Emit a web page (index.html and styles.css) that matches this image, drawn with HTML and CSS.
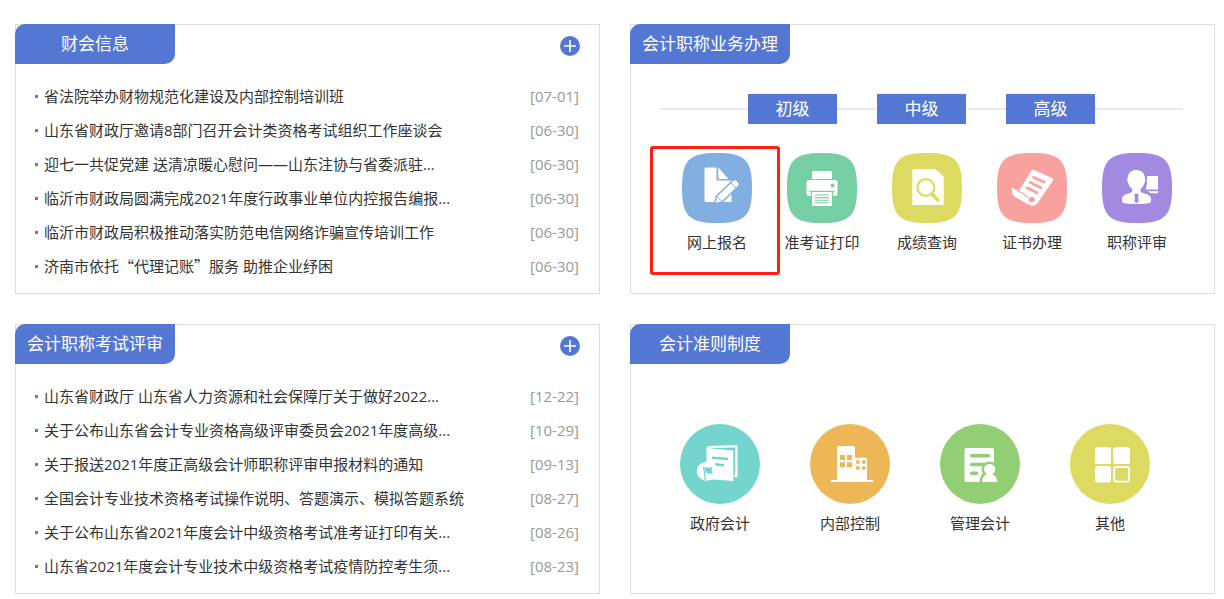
FILE: index.html
```html
<!DOCTYPE html>
<html lang="zh-CN">
<head>
<meta charset="utf-8">
<meta name="viewport" content="width=device-width, initial-scale=1">
<title>会计服务</title>
<link rel="stylesheet" href="styles.css">
</head>
<body>
<main class="board">
  <section class="panel">
    <header class="panel-head">
      <h2 class="tab">财会信息</h2>
      <a class="more" href="#" aria-label="更多财会信息"><svg viewBox="0 0 20 20"><circle cx="10" cy="10" r="10" fill="#5577d4"/><path d="M4 10H16M10 4V16" stroke="#fff" stroke-width="1.6"/></svg></a>
    </header>
    <ul class="news">
      <li><a href="#">省法院举办财物规范化建设及内部控制培训班</a><time>[07-01]</time></li>
      <li><a href="#">山东省财政厅邀请8部门召开会计类资格考试组织工作座谈会</a><time>[06-30]</time></li>
      <li><a href="#">迎七一共促党建 送清凉暖心慰问——山东注协与省委派驻...</a><time>[06-30]</time></li>
      <li><a href="#">临沂市财政局圆满完成2021年度行政事业单位内控报告编报...</a><time>[06-30]</time></li>
      <li><a href="#">临沂市财政局积极推动落实防范电信网络诈骗宣传培训工作</a><time>[06-30]</time></li>
      <li><a href="#">济南市依托<span class="cjk">“</span>代理记账<span class="cjk">”</span>服务 助推企业纾困</a><time>[06-30]</time></li>
    </ul>
  </section>

  <section class="panel">
    <header class="panel-head">
      <h2 class="tab">会计职称业务办理</h2>
    </header>
    <div class="levels">
      <button class="level" type="button">初级</button>
      <button class="level" type="button">中级</button>
      <button class="level" type="button">高级</button>
    </div>
    <nav class="services">
      <a class="service marked" href="#">
        <svg viewBox="0 0 70 70"><path d="M0 35C0 7 7 0 35 0S70 7 70 35 63 70 35 70 0 63 0 35Z" fill="#81afe1"/><path d="M24 14.5H34.5V27.5H49.5V49H24Q22.5 49 22.5 47.5V16Q22.5 14.5 24 14.5Z" fill="#fff"/><path d="M36.3 14.5L46 25.5V26H37.5Q36.3 26 36.3 24.8Z" fill="#fff"/><path d="M33.7 49.7L35.2 43.5 51.5 27.8Q53 26.7 54.4 28L56.2 30Q57.2 31.5 56 32.8L39.8 48.3Z" fill="#fff" stroke="#81afe1" stroke-width="3" paint-order="stroke"/><path d="M48.8 29.8L54.2 35.3M35.2 43.5L39.8 48.3" stroke="#81afe1" stroke-width="1" fill="none"/></svg>
        <span>网上报名</span>
      </a>
      <a class="service" href="#">
        <svg viewBox="0 0 70 70"><path d="M0 35C0 7 7 0 35 0S70 7 70 35 63 70 35 70 0 63 0 35Z" fill="#76cea4"/><path d="M26 18H44Q45 18 45 19V26H25V19Q25 18 26 18Z" fill="#fff"/><path d="M22 27H48Q50.5 27 50.5 30V41Q50.5 43 48.5 43H22Q19.5 43 19.5 41V30Q19.5 27 22 27Z" fill="#fff"/><circle cx="45.6" cy="32.6" r="2" fill="#76cea4"/><path d="M23 38.5H47" stroke="#76cea4" stroke-width="1.4" stroke-linecap="round"/><path d="M24 39V54H46V39" fill="#76cea4"/><path d="M25 39H45V52Q45 53 44 53H26Q25 53 25 52Z" fill="#fff"/><path d="M28 42H42M28 44.6H42M28 47.2H42M28 49.8H42" stroke="#76cea4" stroke-width="1.1"/></svg>
        <span>准考证打印</span>
      </a>
      <a class="service" href="#">
        <svg viewBox="0 0 70 70"><path d="M0 35C0 7 7 0 35 0S70 7 70 35 63 70 35 70 0 63 0 35Z" fill="#dcda60"/><path d="M20.3 16H43.5L51.7 23.5V52H20.3Z" fill="#fff"/><circle cx="33.8" cy="34.5" r="8.4" fill="none" stroke="#dcda60" stroke-width="2.3"/><path d="M40.5 41.5L45.8 47" stroke="#dcda60" stroke-width="3.4" stroke-linecap="round"/></svg>
        <span>成绩查询</span>
      </a>
      <a class="service" href="#">
        <svg viewBox="0 0 70 70"><path d="M0 35C0 7 7 0 35 0S70 7 70 35 63 70 35 70 0 63 0 35Z" fill="#f9a19f"/><path d="M34.5 17.6Q35.5 16.2 37 16.9L55 25Q56.8 26 55.7 28L40.5 50Q38 53.3 34 52.5Q31.5 52 17.3 43.2Q14 40 15.3 34.6Q18 37 21.7 38Z" fill="#fff"/><path d="M21 38Q26 40 31.5 44.5" stroke="#f9a19f" stroke-width="1.2" fill="none"/><path d="M36.5 24.3L47.2 29.2M33.2 29.4L43.8 34.8M30 34.8L40 39.8" stroke="#f9a19f" stroke-width="2.7" stroke-linecap="round"/><path d="M32.2 48.8Q30.6 44.4 34.6 43.8Q38.2 44.2 37.8 47.2Q36.8 49.8 33.8 49.2" fill="#f9a19f"/></svg>
        <span>证书办理</span>
      </a>
      <a class="service" href="#">
        <svg viewBox="0 0 70 70"><path d="M0 35C0 7 7 0 35 0S70 7 70 35 63 70 35 70 0 63 0 35Z" fill="#a28ae0"/><path d="M45 23H55Q56 23 56 24V36.5H43.5L45 31Z" fill="#fff"/><path d="M45.5 38.2H56V40.2H48.5Z" fill="#fff"/><path d="M34.3 17C40 17 43 20.8 43 25.5Q44 27 42.8 29.3Q41.5 34 38.5 35.8V38.3Q39 40 44.5 41Q49 42.5 49 46V49Q47 51 34.5 51T20 49V46Q20 42.5 24.5 41Q30 40 30.3 38.3V35.8Q27.2 34 26 29.3Q24.5 27 25.6 25.5C25.6 20.8 28.6 17 34.3 17Z" fill="#fff"/><path d="M33 40.8H36L36.7 43 36 44.3 36.7 48.5 34.5 50 32.3 48.5 33 44.3 32.3 43Z" fill="#a28ae0"/></svg>
        <span>职称评审</span>
      </a>
    </nav>
  </section>

  <section class="panel">
    <header class="panel-head">
      <h2 class="tab">会计职称考试评审</h2>
      <a class="more" href="#" aria-label="更多会计职称考试评审"><svg viewBox="0 0 20 20"><circle cx="10" cy="10" r="10" fill="#5577d4"/><path d="M4 10H16M10 4V16" stroke="#fff" stroke-width="1.6"/></svg></a>
    </header>
    <ul class="news">
      <li><a href="#">山东省财政厅 山东省人力资源和社会保障厅关于做好2022...</a><time>[12-22]</time></li>
      <li><a href="#">关于公布山东省会计专业资格高级评审委员会2021年度高级...</a><time>[10-29]</time></li>
      <li><a href="#">关于报送2021年度正高级会计师职称评审申报材料的通知</a><time>[09-13]</time></li>
      <li><a href="#">全国会计专业技术资格考试操作说明、答题演示、模拟答题系统</a><time>[08-27]</time></li>
      <li><a href="#">关于公布山东省2021年度会计中级资格考试准考证打印有关...</a><time>[08-26]</time></li>
      <li><a href="#">山东省2021年度会计专业技术中级资格考试疫情防控考生须...</a><time>[08-23]</time></li>
    </ul>
  </section>

  <section class="panel">
    <header class="panel-head">
      <h2 class="tab">会计准则制度</h2>
    </header>
    <nav class="topics">
      <a class="topic" href="#">
        <svg viewBox="0 0 80 80"><circle cx="40" cy="40" r="40" fill="#74d4ce"/><path d="M26.5 25Q26.5 22.2 29.5 22L57.5 21V53H54V50.8L55.2 50.6V23.4L30 24Z" fill="#fff"/><path d="M26.5 24L53.3 26.5V57L33 55.5 25.5 57Q16.8 54 16.8 47.5Q17.3 39 26.5 37.5Z" fill="#fff"/><path d="M32 33.7L48 35M35 40.3L44 41.2" stroke="#74d4ce" stroke-width="2.4"/><path d="M23.6 42.5L25.4 56.5" stroke="#74d4ce" stroke-width="1.3"/><path d="M24.6 42.8Q28 44.5 32.7 42.8L31.5 46 33 49.5Q29.5 50.5 25.8 48.8Z" fill="#74d4ce"/></svg>
        <span>政府会计</span>
      </a>
      <a class="topic" href="#">
        <svg viewBox="0 0 80 80"><circle cx="40" cy="40" r="40" fill="#edb657"/><path d="M21 56H27V24Q27 22 29 22H43Q45 22 45 24V33.7H55.5Q57 33.7 57 35.2V56H63V58H21Z" fill="#fff"/><path d="M30 31H35V36H30ZM37 31H42V36H37ZM30 38.3H35V43.3H30ZM37 38.3H42V43.3H37Z" fill="#edb657"/><g fill="#edb657"><rect x="46" y="36.3" width="3.6" height="3.4" rx="1"/><rect x="52" y="36.3" width="3.6" height="3.4" rx="1"/><rect x="46" y="42.3" width="3.6" height="3.4" rx="1"/><rect x="52" y="42.3" width="3.6" height="3.4" rx="1"/></g></svg>
        <span>内部控制</span>
      </a>
      <a class="topic" href="#">
        <svg viewBox="0 0 80 80"><circle cx="40" cy="40" r="40" fill="#92cf74"/><rect x="24.5" y="24" width="29.5" height="34" rx="2" fill="#fff"/><path d="M31.5 31.8H48.5M31.5 40.5H45M31.5 49.2H36.5" stroke="#92cf74" stroke-width="3.5" stroke-linecap="round"/><path d="M49.6 40C53 40 55.3 42.3 55.3 45.3Q55.3 48.5 52.5 50Q57.3 52.5 57.3 58H42Q42 52.5 46.8 50Q44 48.5 44 45.3C44 42.3 46.3 40 49.6 40Z" fill="#fff" stroke="#92cf74" stroke-width="5" paint-order="stroke"/><path d="M38 58H61V62H38Z" fill="#92cf74"/></svg>
        <span>管理会计</span>
      </a>
      <a class="topic" href="#">
        <svg viewBox="0 0 80 80"><circle cx="40" cy="40" r="40" fill="#dcda60"/><g fill="#fff"><rect x="25" y="23.3" width="16" height="16.7" rx="2"/><rect x="43.2" y="23.3" width="16.8" height="16.7" rx="2"/><rect x="25" y="42" width="16" height="16.5" rx="2"/></g><rect x="44.2" y="43" width="14.8" height="14.6" rx="1.5" fill="none" stroke="#fff" stroke-width="1.8"/></svg>
        <span>其他</span>
      </a>
    </nav>
  </section>
</main>
</body>
</html>
```
FILE: styles.css
```css
* {
  box-sizing: border-box;
}

body {
  margin: 0;
  background: #fff;
  color: #333;
  font: 15px/20px "Open Sans", "Noto Sans CJK SC", sans-serif;
}

a {
  color: inherit;
  text-decoration: none;
}

svg {
  display: block;
  width: 100%;
}

.board {
  display: grid;
  grid-template-columns: repeat(2, minmax(0, 1fr));
  gap: 30px;
  padding: 24px 9px 5px 15px;
}

.panel {
  border: 1px solid #ddd;
}

.panel-head {
  display: flex;
  align-items: flex-start;
  justify-content: space-between;
  margin: -1px;
  padding-right: 20px;
}

.tab {
  width: 160px;
  margin: 0;
  border-radius: 10px 0;
  background: #5577d4;
  color: #fff;
  font-size: 17px;
  font-weight: 400;
  line-height: 40px;
  text-align: center;
}

.more {
  width: 20px;
  margin-top: 12px;
}

.news {
  margin: 0;
  padding: 16px 20px 10px 19px;
  list-style: none;
}

.news li {
  display: flex;
  align-items: center;
  line-height: 34px;
}

.news li::before {
  content: "";
  width: 3px;
  height: 3px;
  margin-right: 6px;
  background: #428bca;
}

.news a {
  flex: 1;
  min-width: 0;
  overflow: hidden;
  text-overflow: ellipsis;
  white-space: nowrap;
}

.news time {
  color: #999;
}

.cjk {
  font-family: "Noto Sans CJK SC", sans-serif;
}

.levels {
  display: flex;
  justify-content: center;
  gap: 40px;
  margin: 31px 31px 0 29px;
  background: linear-gradient(#e6eafb, #e6eafb) center / 100% 2px no-repeat;
}

.level {
  width: 89px;
  height: 30px;
  padding: 0;
  border: 0;
  background: #5577d4;
  color: #fff;
  font: inherit;
  font-size: 17px;
  line-height: 30px;
}

.services,
.topics {
  display: flex;
  justify-content: center;
}

.services {
  gap: 35px;
  padding: 29px 0 0 9px;
}

.topics {
  gap: 50px;
  padding: 61px 15px 0 0;
}

.service,
.topic {
  position: relative;
  display: flex;
  flex-direction: column;
  align-items: center;
  gap: 9px;
  white-space: nowrap;
}

.service {
  width: 70px;
}

.topic {
  width: 80px;
}

.marked::after {
  content: "";
  position: absolute;
  inset: -7px -28px -23px -32px;
  border: 3px solid #ff1f14;
  border-radius: 3px;
}
```
